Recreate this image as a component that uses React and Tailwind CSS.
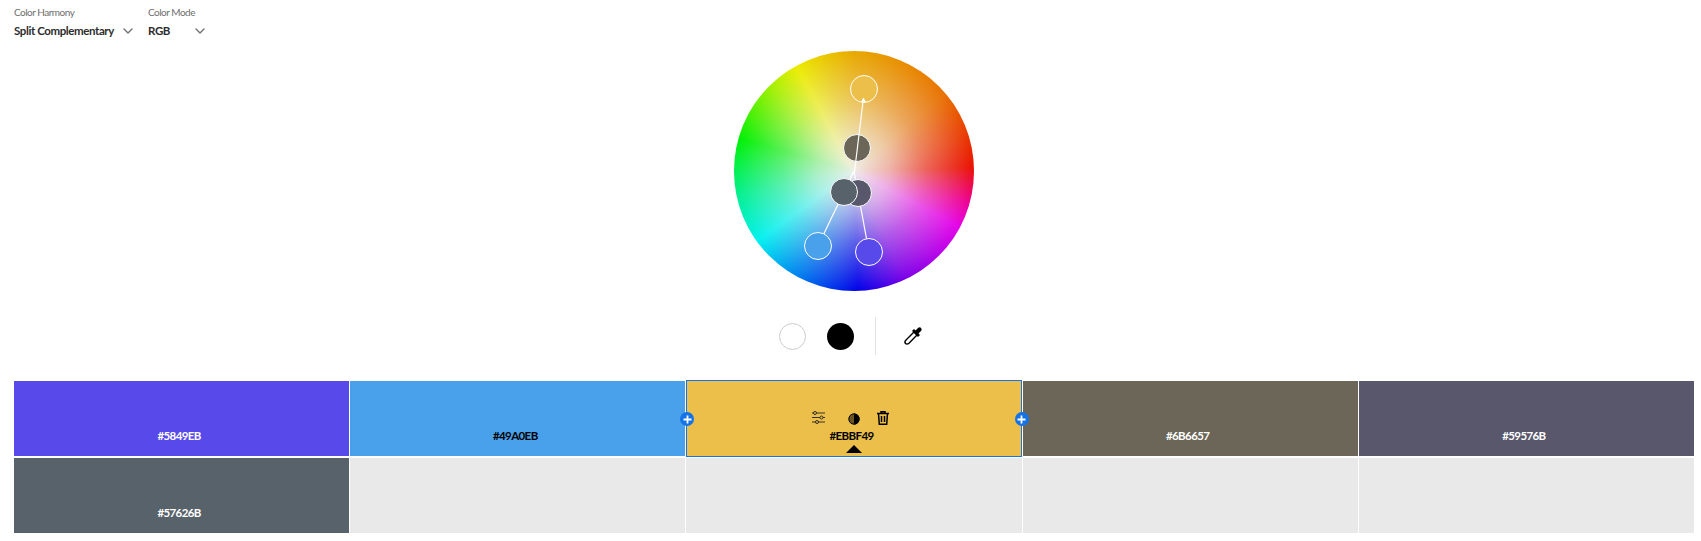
import { ChevronDown } from "lucide-react";

const swatches = [
  { hex: "#5849EB", bg: "bg-[#5849EB]", text: "text-white" },
  { hex: "#49A0EB", bg: "bg-[#49A0EB]", text: "text-black" },
  { hex: "#EBBF49", bg: "bg-[#EBBF49]", text: "text-black", active: true },
  { hex: "#6B6657", bg: "bg-[#6B6657]", text: "text-white" },
  { hex: "#59576B", bg: "bg-[#59576B]", text: "text-white" },
  { hex: "#57626B", bg: "bg-[#57626B]", text: "text-white" },
];

// handle positions are relative to the wheel box
const handles = [
  { x: 130, y: 38, bg: "bg-[#EBBF49]" },
  { x: 123, y: 97, bg: "bg-[#6B6657]" },
  { x: 124, y: 142, bg: "bg-[#59576B]" },
  { x: 110, y: 141, bg: "bg-[#57626B]" },
  { x: 84, y: 195, bg: "bg-[#49A0EB]" },
  { x: 135, y: 201, bg: "bg-[#5849EB]" },
];

const Picker = ({ label, value, width }) => (
  <div className={`flex flex-col whitespace-nowrap ${width}`}>
    <span className="text-[10px] leading-[14px] tracking-[-0.5px] text-[#6e6e6e]">{label}</span>
    <div className="flex items-center justify-between mt-[3px]">
      <span className="text-[11.5px] leading-[18px] tracking-[-0.4px] font-bold text-[#2c2c2c]">{value}</span>
      <ChevronDown className="w-[16px] h-[16px] text-[#6e6e6e]" strokeWidth={2} />
    </div>
  </div>
);

const Wheel = () => (
  <div className="relative w-[240px] h-[240px]">
    <div className="absolute inset-0 rounded-full bg-[conic-gradient(from_0deg,#e8a800_0deg,#e87000_50deg,#ea1000_88deg,#ee0090_105deg,#e400e8_118deg,#7a00e8_155deg,#0000e8_178deg,#0090f0_212deg,#00f0f0_234deg,#00f090_258deg,#00f000_286deg,#a0f000_315deg,#ecec00_331deg,#eac800_345deg,#e8a800_360deg)]" />
    <div className="absolute inset-0 rounded-full bg-[radial-gradient(closest-side,rgba(240,240,235,0.97)_0%,rgba(240,240,235,0.72)_30%,rgba(240,240,235,0.38)_60%,rgba(240,240,235,0)_100%)]" />
    <svg className="absolute inset-0" width="240" height="240" fill="none" stroke="#fff" strokeWidth="1.2">
      <path d="M120 120L110 141" />
      <path d="M120 120L84 195" />
      <path d="M120 120L135 201" />
    </svg>
    {handles.map((h) => (
      <div
        key={h.bg}
        className={`absolute w-[28px] h-[28px] -ml-[14px] -mt-[14px] rounded-full border-[1.5px] border-white ${h.bg}`}
        style={{ left: h.x, top: h.y }}
      />
    ))}
    <svg className="absolute inset-0" width="240" height="240" fill="none" stroke="#fff" strokeWidth="1.2">
      <path d="M129.3 48L120.5 121" />
      <path d="M129.5 46.5L127 51L132 51Z" fill="#fff" stroke="none" />
    </svg>
  </div>
);

const Eyedropper = () => (
  <svg className="w-[20px] h-[20px]" viewBox="0 0 20 20" fill="none" stroke="#000" strokeWidth="1.4">
    <path d="M11 6L14 9L6 17.2C5 18 3.5 18.3 2.5 17.5C1.7 16.6 2 15 3 14Z" />
    <path d="M10 5L15 10L16 9L14.5 7.5L17.5 4.5C18.8 3 17 1 15.5 2.5L12.5 5.5L11 4Z" fill="#000" />
  </svg>
);

const SwatchTools = () => (
  <div className="absolute left-0 right-0 top-[30px] h-[18px]">
    <svg className="absolute left-[126px] top-0 w-[13px] h-[13px]" viewBox="0 0 13 13" fill="none" stroke="#222" strokeWidth="0.9">
      <path d="M0 2H13M0 6.5H13M0 11H13" />
      <circle cx="3" cy="2" r="1.5" fill="#EBBF49" />
      <circle cx="9.5" cy="6.5" r="1.5" fill="#EBBF49" />
      <circle cx="5" cy="11" r="1.5" fill="#EBBF49" />
    </svg>
    <svg className="absolute left-[162px] top-[2px] w-[12px] h-[12px]" viewBox="0 0 12 12">
      <circle cx="6" cy="6" r="5.2" fill="#6b5520" stroke="#000" />
      <path d="M6 .5A5.5 5.5 0 0 1 6 11.5Z" fill="#000" />
    </svg>
    <svg className="absolute left-[191px] top-0 w-[12px] h-[14px]" viewBox="0 0 12 14" fill="none" stroke="#000" strokeWidth="1.5">
      <path d="M0 2.5H12M4 2.5V.8H8V2.5M1.5 2.5L2.3 13.2H9.7L10.5 2.5M4.5 5V11M7.5 5V11" />
    </svg>
  </div>
);

const AddButton = ({ side }) => (
  <div className={`absolute top-[31px] ${side} w-[14px] h-[14px] rounded-full bg-[#1473e6] flex items-center justify-center`}>
    <svg className="w-[9px] h-[9px]" viewBox="0 0 9 9" stroke="#fff" strokeWidth="1.8">
      <path d="M4.5 .5V8.5M.5 4.5H8.5" />
    </svg>
  </div>
);

const Swatch = ({ swatch }) => (
  <div className={`relative h-[75px] flex items-end justify-center pb-[12px] pr-[5px] ${swatch.bg} ${swatch.active ? "z-10" : ""}`}>
    <span className={`text-[11.5px] leading-[16px] tracking-[-0.6px] font-bold ${swatch.text}`}>{swatch.hex}</span>
    {swatch.active && (
      <>
        <div className="absolute inset-x-0 -inset-y-px border border-[#1473e6]" />
        <SwatchTools />
        <AddButton side="-left-[6px]" />
        <AddButton side="-right-[7px]" />
        <div className="absolute bottom-[3px] left-1/2 -ml-[8px] w-0 h-0 border-l-[8px] border-r-[8px] border-b-[8px] border-l-transparent border-r-transparent border-b-black" />
      </>
    )}
  </div>
);

export default function App() {
  return (
    <div className="w-[1680px] ml-[14px] bg-white font-['Lato',sans-serif]">
      {/* PICKERS */}
      <div className="flex gap-[12px] pt-[5px] h-[51px]">
        <Picker label="Color Harmony" value="Split Complementary" width="w-[122px]" />
        <Picker label="Color Mode" value="RGB" width="w-[60px]" />
      </div>

      {/* WHEEL */}
      <div className="flex justify-center">
        <Wheel />
      </div>

      {/* TOOLS */}
      <div className="flex justify-center items-center h-[40px] mt-[25px] mb-[25px]">
        <div className="w-[27px] h-[27px] rounded-full border border-[#ccc] bg-white" />
        <div className="w-[27px] h-[27px] rounded-full bg-black ml-[21px]" />
        <div className="w-px h-[38px] bg-[#e1e1e1] ml-[21px]" />
        <div className="ml-[27px] mr-[7px]"><Eyedropper /></div>
      </div>

      {/* SWATCHES */}
      <div className="grid grid-cols-5 gap-x-px gap-y-[2px]">
        {swatches.map((s) => (
          <Swatch key={s.hex} swatch={s} />
        ))}
        <div className="h-[75px] bg-[#e9e9e9]" />
        <div className="h-[75px] bg-[#e9e9e9]" />
        <div className="h-[75px] bg-[#e9e9e9]" />
        <div className="h-[75px] bg-[#e9e9e9]" />
      </div>
    </div>
  );
}
